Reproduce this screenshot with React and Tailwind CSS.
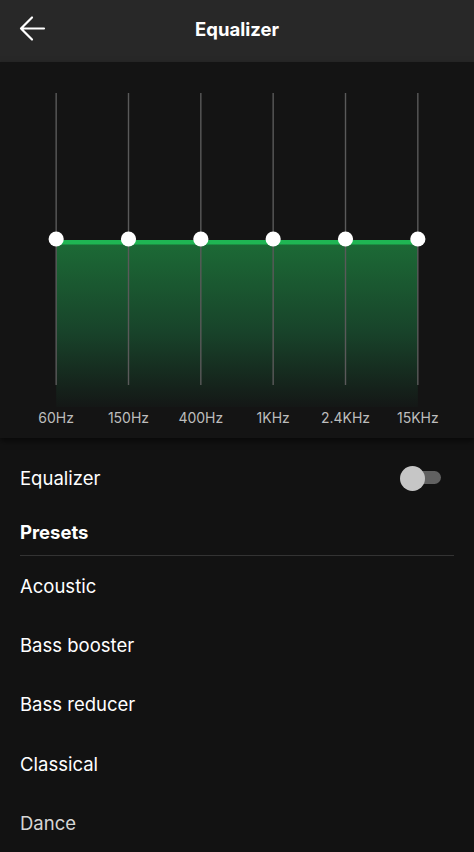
const bands = ['60Hz', '150Hz', '400Hz', '1KHz', '2.4KHz', '15KHz'];
const presets = ['Acoustic', 'Bass booster', 'Bass reducer', 'Classical', 'Dance'];

// chart is 434 wide, six equal columns, line at each column center
const colW = 434 / 6;
const xs = bands.map((_, i) => colW * i + colW / 2);

function Graph() {
  const level = 159; // knob y inside the svg
  return (
    <svg width="434" height="327" viewBox="0 0 434 327" className="block">
      <defs>
        <linearGradient id="eqFill" x1="0" y1="0" x2="0" y2="1">
          <stop offset="0" stopColor="#1c6b36" />
          <stop offset="0.55" stopColor="#18432a" />
          <stop offset="1" stopColor="#141716" />
        </linearGradient>
      </defs>
      <rect x={xs[0]} y={level + 2} width={xs[5] - xs[0]} height={327 - level - 2} fill="url(#eqFill)" />
      {xs.map((x) => (
        <line key={x} x1={x} y1="13" x2={x} y2="305" stroke="#5a5a5a" strokeWidth="1.4" />
      ))}
      <rect x={xs[0]} y={level + 1} width={xs[5] - xs[0]} height="4.5" fill="#1fb553" />
      {xs.map((x) => (
        <circle key={'k' + x} cx={x} cy={level} r="7.6" fill="#ffffff" />
      ))}
    </svg>
  );
}

export default function App() {
  return (
    <div className="w-[474px] h-[852px] overflow-hidden bg-[#121212] text-white" style={{ fontFamily: 'Inter, Lato, sans-serif' }}>
      {/* Header */}
      <div className="h-[62px] bg-[#282828] flex items-center relative">
        <button className="absolute left-[18px] top-[15px] p-0">
          <svg width="28" height="28" viewBox="0 0 28 28" fill="none" stroke="#ffffff" strokeWidth="2.2" strokeLinecap="round" strokeLinejoin="round">
            <path d="M26 13.5H3M14 2.5 3 13.5l11 11" />
          </svg>
        </button>
        <h1 className="w-full text-center text-[18.5px] font-bold leading-none -mt-[4px]">Equalizer</h1>
      </div>

      {/* Chart */}
      <div className="bg-[#141414] pt-[18px] pb-[10px] px-[20px] shadow-[0_3px_6px_rgba(0,0,0,0.55)] relative z-10">
        <Graph />
        <div className="grid grid-cols-6 h-[21px] items-center">
          {bands.map((b) => (
            <span key={b} className="text-center text-[14px] text-[#bdbdbd] leading-none whitespace-nowrap">
              {b}
            </span>
          ))}
        </div>
      </div>

      {/* Settings */}
      <div className="px-[20px]">
        <div className="h-[82px] flex items-center justify-between">
          <span className="text-[18.5px]">Equalizer</span>
          <div className="relative w-[41px] h-[26px] mr-[13px] flex items-center">
            <div className="absolute left-[5px] right-0 top-[5px] h-[13px] rounded-full bg-[#616161]" />
            <div className="absolute left-0 top-0 w-[25px] h-[25px] rounded-full bg-[#c6c6c6]" />
          </div>
        </div>
        <div className="text-[18.5px] font-bold leading-[24px]">Presets</div>
        <div className="mt-[11px] h-px bg-[#333333]" />
        <ul className="pt-[1px]">
          {presets.map((p, i) => (
            <li
              key={p}
              className={`h-[59.3px] flex items-center text-[18.5px] ${i === presets.length - 1 ? 'text-[#d6d6d6]' : 'text-white'}`}
            >
              {p}
            </li>
          ))}
        </ul>
      </div>
    </div>
  );
}
